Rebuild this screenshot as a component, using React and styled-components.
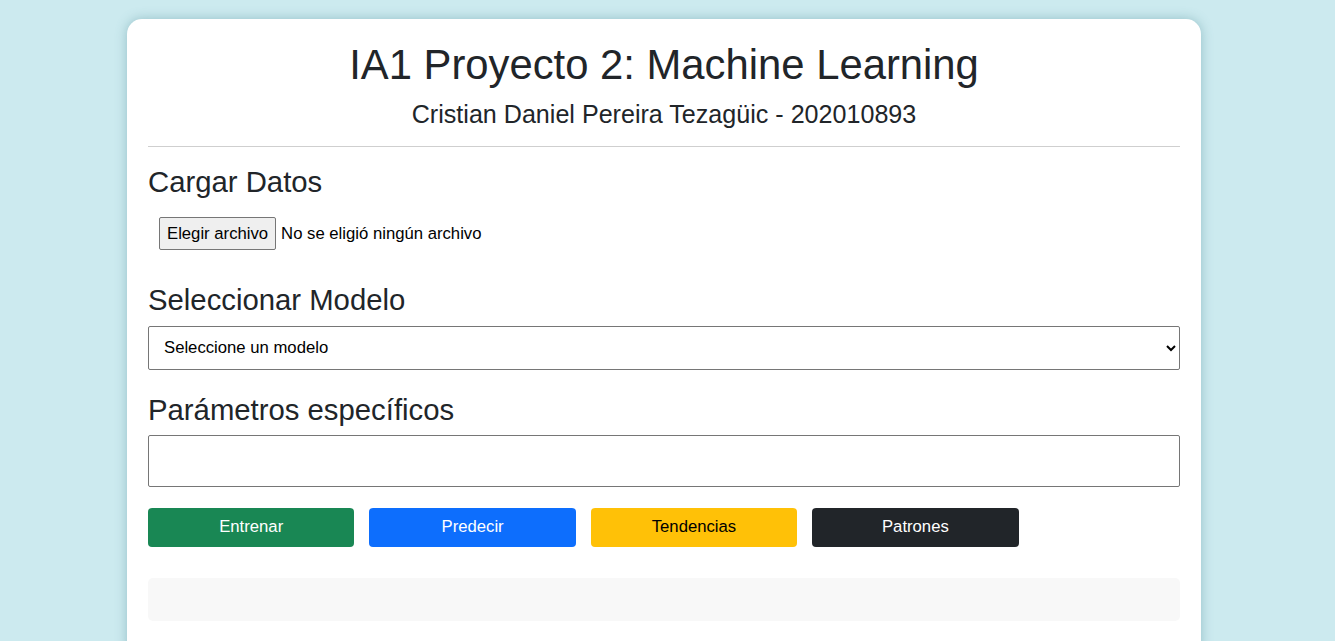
import React, { useState } from "react";
import styled, { createGlobalStyle } from "styled-components";

const GlobalStyle = createGlobalStyle`
  html, body {
    margin: 0;
    padding: 0;
    background-color: #cceaef;
    font-family: "Liberation Sans", Arial, sans-serif;
    color: #212529;
  }
  * {
    box-sizing: border-box;
  }
`;

const Page = styled.div`
  min-height: 641px;
  padding: 19px 0 0 127px;
`;

const Card = styled.div`
  width: 1074px;
  min-height: 640px;
  background-color: #fff;
  border-radius: 15px;
  padding: 21px 21px 20px;
  box-shadow: 0 0 12px rgba(80, 140, 150, 0.45);
`;

const Title = styled.h1`
  margin: 0 0 9px;
  font-size: 41.8px;
  font-weight: 400;
  line-height: 1.2;
  text-align: center;
`;

const SubTitle = styled.h4`
  margin: 0;
  font-size: 25.1px;
  font-weight: 400;
  line-height: 1.2;
  text-align: center;
`;

const Divider = styled.hr`
  margin: 17px 0 17px;
  border: 0;
  border-top: 1px solid #cfcfcf;
`;

const SectionTitle = styled.h3`
  margin: ${(p) => (p.$first ? "0" : "22px")} 0 8px;
  font-size: 29.3px;
  font-weight: 400;
  line-height: 1.2;
`;

const FileRow = styled.div`
  display: flex;
  align-items: center;
  padding: 10px 11px 10px;
`;

const FileButton = styled.label`
  display: inline-flex;
  align-items: center;
  height: 33px;
  padding: 0 7px;
  font-size: 16.7px;
  color: #000;
  background-color: #efefef;
  border: 1px solid #767676;
  border-radius: 2px;
  cursor: pointer;
`;

const HiddenInput = styled.input`
  display: none;
`;

const FileName = styled.span`
  margin-left: 5px;
  font-size: 16.7px;
  color: #000;
`;

const Select = styled.select`
  display: block;
  width: 100%;
  height: 44px;
  padding: 0 8px 0 11px;
  font-family: "Liberation Sans", Arial, sans-serif;
  font-size: 16.7px;
  color: #000;
  background-color: #fff;
  border: 1px solid #767676;
  border-radius: 2px;
`;

const ParamInput = styled.input`
  display: block;
  width: 100%;
  height: 52px;
  padding: 0 12px;
  font-family: "Liberation Sans", Arial, sans-serif;
  font-size: 16.7px;
  border: 1px solid #767676;
  border-radius: 2px;
`;

const ButtonRow = styled.div`
  display: flex;
  gap: 15px;
  margin-top: 21px;
`;

const ActionButton = styled.button`
  width: 20%;
  height: 39px;
  padding-top: 1px;
  font-family: "Liberation Sans", Arial, sans-serif;
  font-size: 16.7px;
  color: ${(p) => p.$text};
  background-color: ${(p) => p.$bg};
  border: 0;
  border-radius: 4px;
  cursor: pointer;
`;

const ResultBox = styled.div`
  margin-top: 31px;
  height: 43px;
  background-color: #f8f8f8;
  border-radius: 5px;
`;

const buttons = [
  { label: "Entrenar", bg: "#198754", text: "#fff" },
  { label: "Predecir", bg: "#0d6efd", text: "#fff" },
  { label: "Tendencias", bg: "#ffc107", text: "#000" },
  { label: "Patrones", bg: "#212529", text: "#fff" },
];

const App = () => {
  const [fileName, setFileName] = useState("");
  const [model, setModel] = useState("");
  const [params, setParams] = useState("");

  const handleFile = (e) => {
    const file = e.target.files[0];
    setFileName(file ? file.name : "");
  };

  return (
    <Page>
      <GlobalStyle />
      <Card>
        <Title>IA1 Proyecto 2: Machine Learning</Title>
        <SubTitle>Cristian Daniel Pereira Tezagüic - 202010893</SubTitle>
        <Divider />

        <SectionTitle $first>Cargar Datos</SectionTitle>
        <FileRow>
          <FileButton htmlFor="fileInput">Elegir archivo</FileButton>
          <HiddenInput id="fileInput" type="file" onChange={handleFile} />
          <FileName>{fileName || "No se eligió ningún archivo"}</FileName>
        </FileRow>

        <SectionTitle>Seleccionar Modelo</SectionTitle>
        <Select value={model} onChange={(e) => setModel(e.target.value)}>
          <option value="">Seleccione un modelo</option>
          <option value="linear">Regresión lineal</option>
          <option value="poly">Regresión polinomial</option>
          <option value="tree">Árbol de decisión</option>
          <option value="kmeans">K-Means</option>
        </Select>

        <SectionTitle>Parámetros específicos</SectionTitle>
        <ParamInput value={params} onChange={(e) => setParams(e.target.value)} />

        <ButtonRow>
          {buttons.map((b) => (
            <ActionButton key={b.label} $bg={b.bg} $text={b.text}>
              {b.label}
            </ActionButton>
          ))}
        </ButtonRow>

        <ResultBox />
      </Card>
    </Page>
  );
};

export default App;
